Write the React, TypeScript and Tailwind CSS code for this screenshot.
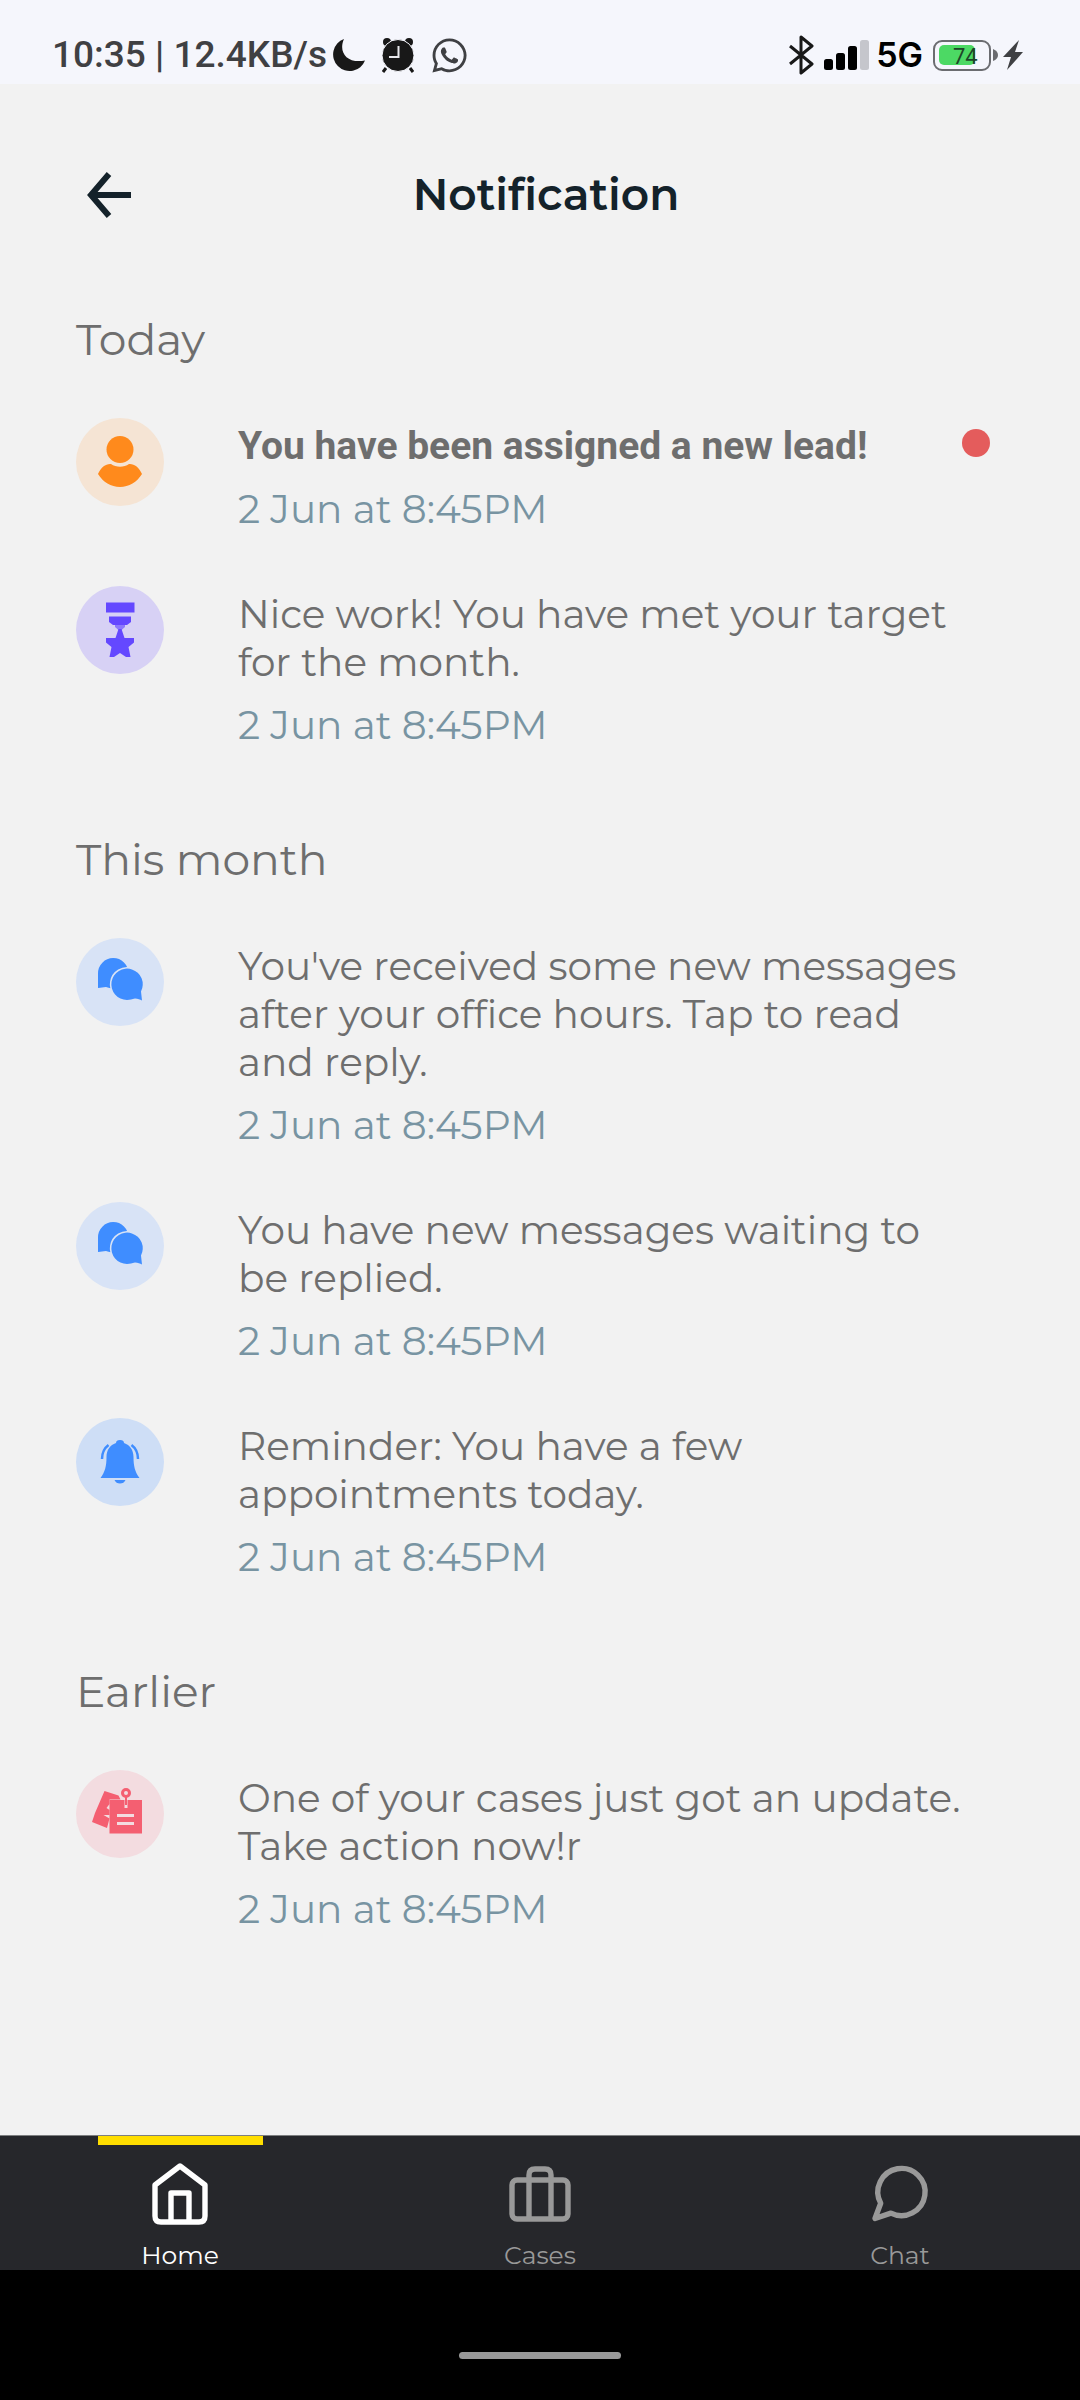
import type { ReactNode } from "react";
import { FaWhatsapp } from "react-icons/fa";

type Kind = "lead" | "award" | "message" | "reminder" | "case";

interface Notice {
  kind: Kind;
  text: string;
  time: string;
  unread?: boolean;
}

const sections: { title: string; items: Notice[] }[] = [
  {
    title: "Today",
    items: [
      { kind: "lead", text: "You have been assigned a new lead!", time: "2 Jun at 8:45PM", unread: true },
      { kind: "award", text: "Nice work! You have met your target\nfor the month.", time: "2 Jun at 8:45PM" },
    ],
  },
  {
    title: "This month",
    items: [
      { kind: "message", text: "You've received some new messages\nafter your office hours. Tap to read\nand reply.", time: "2 Jun at 8:45PM" },
      { kind: "message", text: "You have new messages waiting to\nbe replied.", time: "2 Jun at 8:45PM" },
      { kind: "reminder", text: "Reminder: You have a few\nappointments today.", time: "2 Jun at 8:45PM" },
    ],
  },
  {
    title: "Earlier",
    items: [{ kind: "case", text: "One of your cases just got an update.\nTake action now!r", time: "2 Jun at 8:45PM" }],
  },
];

const glyphs: Record<Kind, ReactNode> = {
  lead: (
    <g fill="#ff8a1c">
      <circle cx="44" cy="31.5" r="13.5" />
      <path d="M22 56C25 49 30 45.500 35 46C40 49.500 48 49.500 53 46C58 45.500 63 49 66 56C61 64 53 69 44 69S27 64 22 56Z" />
    </g>
  ),
  award: (
    <g fill="#6448ff">
      <path d="M30 16.500h28.500v10H30zM33 30.500h22V36l-4 3H37l-4-3z" />
      <path d="M39 39h10v2l-3.500 3h-3L39 41z" opacity=".65" />
      <path d="M42.500 43h3l3 9H58v4.500L52.500 61 54.500 71H50l-6-4-6 4h-4.500l2-10L30 56.500V52h9.500z" />
    </g>
  ),
  message: (
    <>
      <path d="M22 50V35.500a15.200 15.200 0 1 1 15 15c-2 0-5-1-7-1.500-3 0-5 1-8 1Z" fill="#3f8dff" />
      <path
        d="M66 62.500l-1-9A15.700 15.700 0 1 0 51 62c3 0 5-1 8-1.500 3 0 5 1 7 2Z"
        fill="#3f8dff"
        stroke="#d8e3f6"
        strokeWidth="3"
        paintOrder="stroke"
      />
    </>
  ),
  reminder: (
    <>
      <path d="M40 25q0-3 4-3t4 3c6 2 9.500 7 9.500 14 0 9 1.500 15 6 21h-39c4.500-6 6-12 6-21 0-7 3.500-12 9.500-14zM38.500 62h11c-1 2.500-3 3.500-5.500 3.500s-4.500-1-5.500-3.500Z" fill="#3f8dff" />
      <path d="M32.500 27c-4 3-6.500 8-6.500 14M55.500 27c4 3 6.500 8 6.500 14" fill="none" stroke="#3f8dff" strokeWidth="2.500" />
    </>
  ),
  case: (
    <>
      <path d="M28.500 21l14 4.500 2 4h-11V34l-3 4 3 2v5h-6l6 3.500L31 58l-15-6 3-9z" fill="#f45f71" />
      <path d="M33.500 30H66v33.500H33.500z" fill="#f45f71" />
      <path d="M41 45.500h17M41 53.500h17M50 29v9" stroke="#f3dce0" strokeWidth="3" />
      <circle cx="50" cy="23" r="3.500" fill="none" stroke="#f45f71" strokeWidth="3" />
      <path d="M50 26v9" stroke="#f45f71" strokeWidth="2" />
    </>
  ),
};

const tints: Record<Kind, string> = {
  lead: "bg-[#f5e4d4]",
  award: "bg-[#d7d1f5]",
  message: "bg-[#d8e3f6]",
  reminder: "bg-[#cedef6]",
  case: "bg-[#f3dce0]",
};

function StatusBar() {
  return (
    <div className="flex h-[84px] items-center justify-between bg-[#f5f6fc] pt-[26px] pr-[57px] pl-[52px] font-[Roboto,sans-serif]">
      <div className="flex items-center text-[#3f4043]">
        <span className="text-[37px] leading-[44px] font-medium">10:35 | 12.4KB/s</span>
        <svg className="ml-[5px] size-[34px]" viewBox="0 0 34 34" aria-hidden="true">
          <path d="M12 1C6 14 15 26 33 22.500A16.500 16.500 0 1 1 12 1Z" fill="#181818" />
        </svg>
        <svg className="ml-4 h-9 w-8" viewBox="0 0 32 36" aria-hidden="true">
          <path d="M4 31l-3 4M28 31l3 4" stroke="#181818" strokeWidth="3" />
          <circle cx="5" cy="5" r="4" fill="#181818" />
          <circle cx="27" cy="5" r="4" fill="#181818" />
          <circle cx="16" cy="18.500" r="16" fill="#181818" stroke="#f5f6fc" strokeWidth="1" />
          <path d="M16.500 9v11H7" fill="none" stroke="#e8e8ec" strokeWidth="2" />
        </svg>
        <FaWhatsapp className="ml-4 size-[39px]" aria-hidden="true" />
      </div>
      <div className="flex items-center">
        <svg className="h-10 w-[26px]" viewBox="0 0 26 40" fill="none" stroke="#181818" strokeWidth="3" aria-hidden="true">
          <path d="M2 11l22 18-11 9V2l11 9L2 29" strokeLinejoin="round" />
        </svg>
        <svg className="ml-[10px] h-[30px] w-[46px]" viewBox="0 0 46 30" aria-hidden="true">
          <rect y="19" width="9" height="11" rx="2.500" />
          <rect x="12" y="13" width="9" height="17" rx="2.500" />
          <rect x="24" y="6" width="9" height="24" rx="2.500" />
          <rect x="36" width="9" height="30" rx="2.500" fill="#c5c6cc" />
        </svg>
        <span className="ml-[6px] font-[Inter,sans-serif] text-[34px] leading-[40px] font-semibold text-black">5G</span>
        <div className="ml-[10px] flex h-[31px] w-[58px] items-center rounded-[9px] border-2 border-[#6b6c70] p-1">
          <div className="flex h-5 w-[36px] items-center rounded-[5px] bg-[#4cd964] pt-1 pl-[14px]">
            <span className="text-[22px] leading-none text-[#1d4527]">74</span>
          </div>
        </div>
        <svg className="ml-[2px] h-3 w-[5px]" viewBox="0 0 5 12" aria-hidden="true">
          <path d="M0 0q5 2 5 6t-5 6z" fill="#6b6c70" />
        </svg>
        <svg className="ml-[5px] h-[30px] w-5" viewBox="0 0 20 30" aria-hidden="true">
          <path d="M16 0L0 17h8L4 30 20 12h-8z" fill="#3f4043" />
        </svg>
      </div>
    </div>
  );
}

function NoticeRow({ item }: { item: Notice }) {
  return (
    <li className="flex items-start pb-[53px]">
      <span className={`size-[88px] shrink-0 rounded-full ${tints[item.kind]}`}>
        <svg className="size-full" viewBox="0 0 88 88" aria-hidden="true">
          {glyphs[item.kind]}
        </svg>
      </span>
      <div className="ml-[74px] flex-1 pt-1">
        <p
          className={
            item.unread
              ? "font-[Roboto,sans-serif] text-[39px] leading-[48px] font-bold whitespace-pre-line"
              : "text-[39px] leading-[48px] whitespace-pre-line"
          }
        >
          {item.text}
        </p>
        <time className="mt-[15px] block text-[39px] leading-[48px] text-[#7894a2]">{item.time}</time>
      </div>
      {item.unread && <span className="mt-[11px] size-7 rounded-full bg-[#e45c5c]" role="img" aria-label="Unread" />}
    </li>
  );
}

function NavItem({ label, active, children }: { label: string; active?: boolean; children: ReactNode }) {
  return (
    <a
      href={`#${label.toLowerCase()}`}
      aria-current={active ? "page" : undefined}
      className={`flex flex-1 flex-col items-center ${active ? "text-white" : "text-[#999999]"}`}
    >
      <span className={`h-[9px] w-[165px] ${active ? "bg-[#ffde00]" : ""}`} />
      <svg
        className="mt-4 size-16"
        viewBox="0 0 64 64"
        fill="none"
        stroke="currentColor"
        strokeWidth="5.400"
        strokeLinejoin="round"
        strokeLinecap="round"
        aria-hidden="true"
      >
        {children}
      </svg>
      <span className="mt-4 text-[25px] leading-[28px]">{label}</span>
    </a>
  );
}

export default function App() {
  return (
    <div className="flex min-h-screen flex-col bg-[#f2f2f2] font-[Montserrat,Inter,sans-serif] font-normal text-[#6e6e6e]">
      <StatusBar />
      <header className="grid grid-cols-[1fr_auto_1fr] items-center px-[76px] pt-20 pb-[58px]">
        <button type="button" aria-label="Back" className="ml-2 flex size-[60px] items-center">
          <svg className="h-12 w-12" viewBox="0 0 48 48" fill="none" stroke="#14222a" strokeWidth="6" aria-hidden="true">
            <path d="M25 4L7 25l18 21M7 25h40" />
          </svg>
        </button>
        <h1 className="ml-3 text-[44px] leading-[60px] font-semibold text-[#14222a]">Notification</h1>
      </header>
      <main className="flex-1 pr-[90px] pl-[76px]">
        {sections.map((section) => (
          <section key={section.title} className="pt-[30px]">
            <h2 className="mb-[52px] text-[44px] leading-[54px]">{section.title}</h2>
            <ul>
              {section.items.map((item, i) => (
                <NoticeRow key={i} item={item} />
              ))}
            </ul>
          </section>
        ))}
      </main>
      <nav aria-label="Main" className="flex h-[135px] border-t border-[#7d7f80] bg-[#26272b]">
        <NavItem label="Home" active>
          <path d="M32 5L7 24v31q0 6 6 6h38q6 0 6-6V24Z" />
          <path d="M23 60V32h18v28" />
        </NavItem>
        <NavItem label="Cases">
          <rect x="4" y="19" width="56" height="39" rx="5" />
          <path d="M21 57V14q0-6 6-6h10q6 0 6 6v43" />
        </NavItem>
        <NavItem label="Chat">
          <path d="M12.700 42.200A23.600 23.600 0 1 1 22.900 52.100L7 57.500Z" />
        </NavItem>
      </nav>
      <div className="flex h-[130px] items-center justify-center bg-black pt-10">
        <div className="h-[7px] w-[162px] rounded-full bg-[#999999]" />
      </div>
    </div>
  );
}
